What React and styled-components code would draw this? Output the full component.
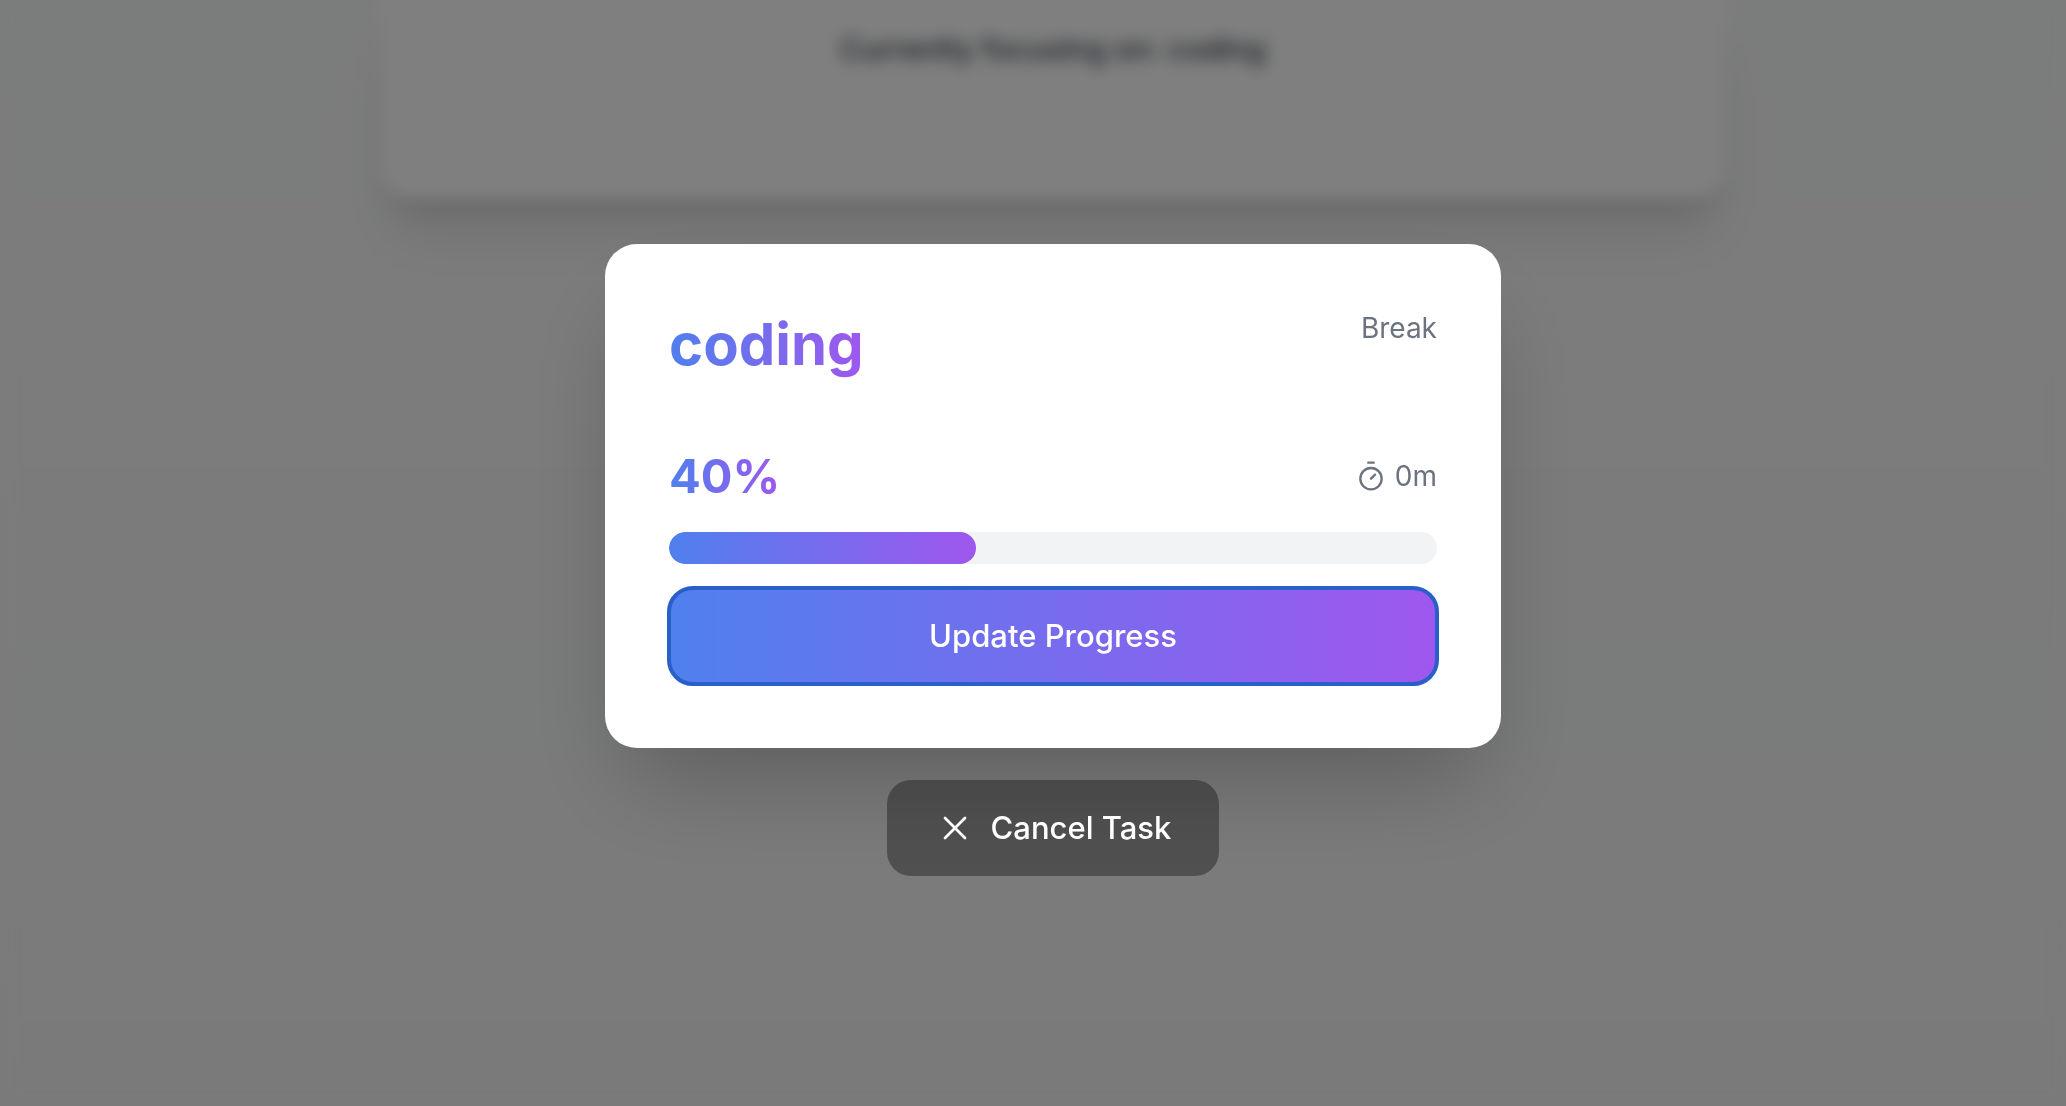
import styled, { createGlobalStyle } from 'styled-components';
import { useState } from "react";
import { Timer, X } from "lucide-react";

const GlobalStyle = createGlobalStyle`
* {
    box-sizing: border-box;
}
body {
    margin: 0;
    background: linear-gradient(180deg, #f7f9f8, #f4f5f4);
    font-family: Inter, "Liberation Sans", sans-serif;
    -webkit-font-smoothing: antialiased;
    overflow: hidden;
}
`;

const gradient = "linear-gradient(to right, #4f80ee, #9f57ee)";

const Page = styled.main`
min-height: 100vh;
padding-left: 40px;
`;

const FocusCard = styled.section`
max-width: 1344px;
margin: 0 auto;
padding: 25px 64px 127px;
border-radius: 0 0 32px 32px;
background-color: #ffffff;
box-shadow: 0 40px 50px -10px rgba(0, 0, 0, 0.1), 0 16px 20px -12px rgba(0, 0, 0, 0.16);
text-align: center;
`;

const FocusText = styled.p`
margin: 0;
color: #374151;
font-size: 30px;
line-height: 48px;
font-weight: 500;
`;

const Overlay = styled.div`
position: fixed;
inset: 0;
display: flex;
flex-direction: column;
align-items: center;
justify-content: center;
gap: 32px;
padding: 14px 0 0 40px;
background-color: rgba(0, 0, 0, 0.5);
backdrop-filter: blur(8px);
`;

const ModalCard = styled.div`
width: 100%;
max-width: 896px;
padding: 64px;
border-radius: 32px;
background-color: #ffffff;
box-shadow: 0 50px 100px -24px rgba(0, 0, 0, 0.25);
`;

const Row = styled.div`
display: flex;
justify-content: space-between;
align-items: ${props => props.$align};
margin-bottom: ${props => props.$space};
`;

const TaskName = styled.h2`
margin: 0;
font-size: 58px;
line-height: 72px;
font-weight: 700;
color: transparent;
background: ${gradient};
background-clip: text;
`;

const Percent = styled.span`
font-size: 47px;
line-height: 64px;
font-weight: 700;
color: transparent;
background: ${gradient};
background-clip: text;
`;

const Muted = styled.span`
display: flex;
align-items: center;
gap: 8px;
color: #6b7280;
font-size: 28px;
line-height: 40px;
`;

const Track = styled.div`
height: 32px;
margin-bottom: 24px;
border-radius: 16px;
background-color: #f2f3f5;
overflow: hidden;
`;

const Fill = styled.div`
height: 100%;
border-radius: 16px;
background: ${gradient};
`;

const Button = styled.button`
display: flex;
align-items: center;
justify-content: center;
gap: 16px;
height: 96px;
padding: 0 48px;
border: none;
border-radius: 24px;
color: #ffffff;
font-family: inherit;
font-size: 31px;
line-height: 48px;
font-weight: 500;
cursor: pointer;
`;

const UpdateButton = styled(Button)`
width: 100%;
background: ${gradient};
outline: 4px solid #295fc8;
outline-offset: -2px;
`;

const CancelButton = styled(Button)`
background-color: rgba(0, 0, 0, 0.35);
`;

function App() {
    const [progress, setProgress] = useState(40);
    const [open, setOpen] = useState(true);

    const updateProgress = () => {
        setProgress(Math.min(progress + 10, 100));
    }

    return (
        <>
            <GlobalStyle/>
            <Page>
                <FocusCard>
                    <FocusText>Currently focusing on: coding</FocusText>
                </FocusCard>
            </Page>
            {open && (
                <Overlay>
                    <ModalCard role="dialog" aria-labelledby="task-name">
                        <Row $align="flex-start" $space="64px">
                            <TaskName id="task-name">coding</TaskName>
                            <Muted>Break</Muted>
                        </Row>
                        <Row $align="center" $space="24px">
                            <Percent>{progress}%</Percent>
                            <Muted>
                                <Timer size={32} strokeWidth={1.75}/>
                                0m
                            </Muted>
                        </Row>
                        <Track role="progressbar" aria-labelledby="task-name" aria-valuenow={progress}>
                            <Fill style={{width: `${progress}%`}}/>
                        </Track>
                        <UpdateButton type="button" onClick={updateProgress}>Update Progress</UpdateButton>
                    </ModalCard>
                    <CancelButton type="button" onClick={() => setOpen(false)}>
                        <X size={40} strokeWidth={1.6}/>
                        Cancel Task
                    </CancelButton>
                </Overlay>
            )}
        </>
    );
}


export default App;
